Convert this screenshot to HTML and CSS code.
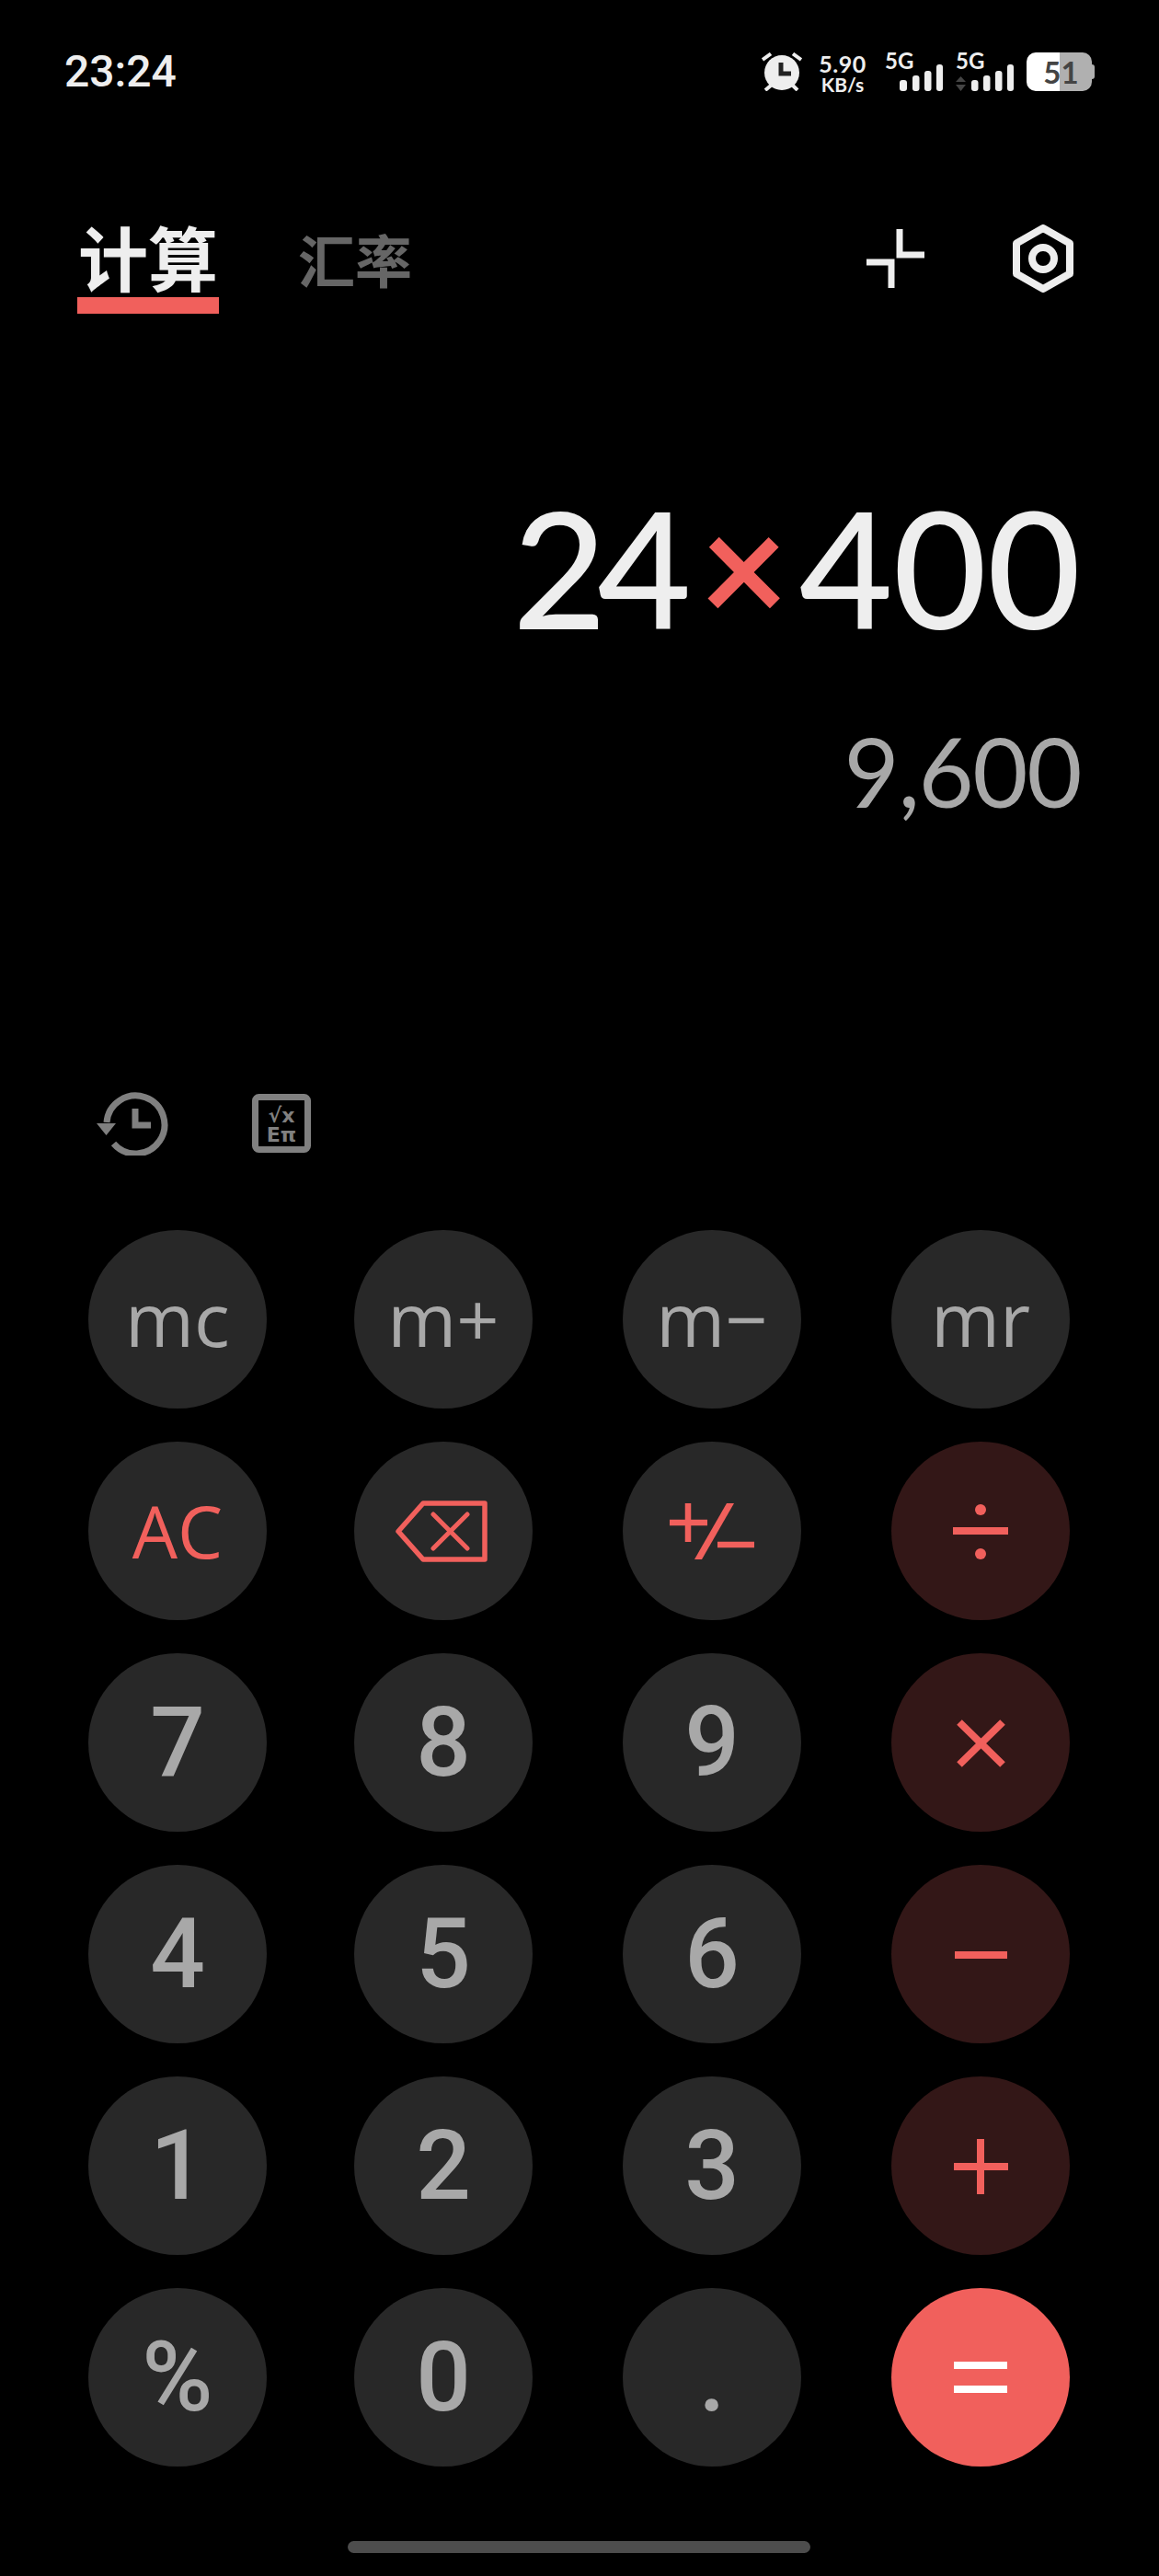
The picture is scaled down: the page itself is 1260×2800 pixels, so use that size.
FILE: index.html
```html
<!DOCTYPE html>
<html lang="zh-CN">
<head>
<meta charset="utf-8">
<title>计算器</title>
<link rel="stylesheet" href="styles.css">
</head>
<body>
<main class="app">
  <header class="status">
    <span class="clock">23:24</span>
    <div class="indicators">
      <svg class="alarm" viewBox="0 0 44 42" aria-label="闹钟">
        <circle cx="22" cy="22" r="19" class="fill-light"/>
        <path d="M21 11 V23 H32" class="alarm-hand"/>
        <path d="M1 8 L10 1.500 M34 1.500 L43 8 M4 41 L10 36 M39 41 L34 36" class="alarm-ear"/>
      </svg>
      <div class="speed"><span class="speed-value">5.90</span><span class="speed-unit">KB/s</span></div>
      <svg class="signal" viewBox="0 0 63 42" aria-label="5G">
        <text x="0" y="18" class="signal-label">5G</text>
        <rect x="16" y="30" width="8" height="12" rx="3" class="fill-light"/>
        <rect x="30" y="25" width="7.500" height="17" rx="3" class="fill-light"/>
        <rect x="43" y="20" width="7.500" height="22" rx="3" class="fill-light"/>
        <rect x="56" y="13" width="7" height="29" rx="3" class="fill-light"/>
      </svg>
      <svg class="signal" viewBox="0 0 63 42" aria-label="5G">
        <text x="0" y="18" class="signal-label">5G</text>
        <path d="M5.500 26 L11 32 H0 Z M0 35 H11 L5.500 42 Z" class="fill-dim"/>
        <rect x="17" y="30" width="7.500" height="12" rx="3" class="fill-light"/>
        <rect x="30" y="25" width="7.500" height="17" rx="3" class="fill-light"/>
        <rect x="43" y="20" width="7.500" height="22" rx="3" class="fill-light"/>
        <rect x="56" y="13" width="7" height="29" rx="3" class="fill-light"/>
      </svg>
      <div class="battery">51</div>
    </div>
  </header>

  <nav class="tabs">
    <div class="tab-active">
      <span class="tab-active-label">计算</span>
      <span class="tab-underline"></span>
    </div>
    <span class="tab-idle">汇率</span>
    <div class="tab-actions">
      <svg class="icon-compact" viewBox="0 0 63 64" aria-label="小窗">
        <path d="M36 0 V28 H63 M0 36 H27 V64" class="stroke-compact"/>
      </svg>
      <svg class="icon-settings" viewBox="0 0 66 74" aria-label="设置">
        <path d="M33 4 L62 20.500 V53.500 L33 70 L4 53.500 V20.500 Z" class="stroke-light"/>
        <circle cx="33" cy="37" r="12" class="stroke-light"/>
      </svg>
    </div>
  </nav>

  <section class="display">
    <div class="expression"><span class="operand-left">24</span><span class="operator">×</span>400</div>
    <div class="result">9,600</div>
  </section>

  <div class="tools">
    <svg class="icon-history" viewBox="0 0 78 72" aria-label="历史记录">
      <path d="M11 36 A31.500 31.500 0 1 1 18.500 59" class="stroke-grey"/>
      <path d="M0 37 H21 L10.500 50 Z" class="fill-grey"/>
      <path d="M42 21 V39 H59" class="stroke-grey"/>
    </svg>
    <svg class="icon-science" viewBox="0 0 64 64" aria-label="科学计算">
      <rect x="3.500" y="3.500" width="57" height="57" rx="4" class="stroke-grey"/>
      <text class="science-text"><tspan x="32" y="31">√x</tspan><tspan x="32" y="52">Eπ</tspan></text>
    </svg>
  </div>

  <section class="keypad">
    <button class="key key-memory">mc</button>
    <button class="key key-memory">m+</button>
    <button class="key key-memory">m−</button>
    <button class="key key-memory">mr</button>

    <button class="key key-clear">AC</button>
    <button class="key" aria-label="退格">
      <svg class="key-icon" viewBox="0 0 194 194">
        <path d="M142 67 V128 H75 L48 97.500 L75 67 Z" class="stroke-red stroke-mid"/>
        <path d="M86 79 L123 116 M123 79 L86 116" class="stroke-red stroke-thin"/>
      </svg>
    </button>
    <button class="key" aria-label="正负">
      <svg class="key-icon" viewBox="0 0 194 194">
        <path d="M51 88 H92 M71 67 V109 M103 112 H143" class="stroke-red stroke-mid-flat"/>
        <path d="M113 67 H121 L86 128 H78 Z" class="fill-red"/>
      </svg>
    </button>
    <button class="key key-op" aria-label="除">
      <svg class="key-icon" viewBox="0 0 194 194">
        <path d="M67 97 H127" class="stroke-red stroke-op"/>
        <circle cx="97" cy="74" r="6" class="fill-red"/>
        <circle cx="97" cy="122" r="6" class="fill-red"/>
      </svg>
    </button>

    <button class="key key-digit">7</button>
    <button class="key key-digit">8</button>
    <button class="key key-digit">9</button>
    <button class="key key-op" aria-label="乘">
      <svg class="key-icon" viewBox="0 0 194 194">
        <path d="M74 75 L121 121 M121 75 L74 121" class="stroke-red stroke-op"/>
      </svg>
    </button>

    <button class="key key-digit">4</button>
    <button class="key key-digit">5</button>
    <button class="key key-digit">6</button>
    <button class="key key-op" aria-label="减">
      <svg class="key-icon" viewBox="0 0 194 194">
        <path d="M69 98 H126" class="stroke-red stroke-op"/>
      </svg>
    </button>

    <button class="key key-digit">1</button>
    <button class="key key-digit">2</button>
    <button class="key key-digit">3</button>
    <button class="key key-op" aria-label="加">
      <svg class="key-icon" viewBox="0 0 194 194">
        <path d="M68 98 H127 M97 68 V128" class="stroke-red stroke-op"/>
      </svg>
    </button>

    <button class="key key-digit">%</button>
    <button class="key key-digit">0</button>
    <button class="key key-digit">.</button>
    <button class="key key-equals" aria-label="等于">
      <svg class="key-icon" viewBox="0 0 194 194">
        <path d="M68 84 H126 M68 110 H126" class="stroke-white stroke-op"/>
      </svg>
    </button>
  </section>

  <div class="home-bar"></div>
</main>
</body>
</html>
```

FILE: styles.css
```css
* { box-sizing: border-box; }

html, body {
  margin: 0;
  background: #000;
}

.app {
  width: 1260px;
  height: 2800px;
  background: #000;
  color: #eee;
  font-family: "Lato", "Noto Sans CJK SC", sans-serif;
  display: flex;
  flex-direction: column;
  overflow: hidden;
}

/* Status bar */
.status {
  height: 120px;
  padding: 57px 73px 0 70px;
  display: flex;
  justify-content: space-between;
  align-items: flex-start;
}

.clock {
  font-family: "Roboto", sans-serif;
  font-size: 48px;
  font-weight: 500;
  line-height: 42px;
  color: #eee;
}

.indicators {
  display: flex;
  align-items: flex-start;
}

.alarm {
  width: 44px;
  height: 42px;
  margin-right: 18px;
}

.fill-light { fill: #eee; }
.fill-dim { fill: #444; }
.fill-grey { fill: #808080; }
.fill-red { fill: #f1605c; }

.alarm-hand {
  fill: none;
  stroke: #222;
  stroke-width: 5;
}

.alarm-ear {
  fill: none;
  stroke: #eee;
  stroke-width: 4;
}

.speed {
  width: 52px;
  margin-right: 20px;
  display: flex;
  flex-direction: column;
  align-items: center;
  font-weight: 700;
  color: #eee;
}

.speed-value {
  font-size: 25px;
  line-height: 24px;
  letter-spacing: 0.5px;
}

.speed-unit {
  font-size: 21px;
  line-height: 20px;
  margin-top: 1px;
}

.signal {
  width: 63px;
  height: 42px;
  margin-right: 14px;
  overflow: visible;
}

.signal-label {
  font-family: "Lato", sans-serif;
  font-size: 24px;
  font-weight: 700;
  fill: #eee;
}

.battery {
  position: relative;
  width: 71px;
  height: 42px;
  border-radius: 10px;
  background: linear-gradient(90deg, #fff 36px, #b0b0b0 36px);
  color: #444;
  font-size: 33px;
  font-weight: 700;
  line-height: 42px;
  text-align: center;
  padding-left: 4px;
}

.battery::after {
  content: "";
  position: absolute;
  left: 71px;
  top: 13px;
  width: 3px;
  height: 16px;
  border-radius: 0 3px 3px 0;
  background: #b0b0b0;
}

/* Tabs */
.tabs {
  height: 240px;
  padding: 121px 93px 0 84px;
  display: flex;
  align-items: flex-start;
}

.tab-active {
  width: 154px;
  display: flex;
  flex-direction: column;
  align-items: center;
}

.tab-active-label {
  font-family: "Noto Sans CJK SC", sans-serif;
  font-size: 76px;
  font-weight: 700;
  line-height: 74px;
  white-space: nowrap;
  color: #eee;
}

.tab-underline {
  width: 154px;
  height: 18px;
  margin-top: 8px;
  background: #f1605c;
}

.tab-idle {
  font-family: "Noto Sans CJK SC", sans-serif;
  font-size: 62px;
  font-weight: 700;
  line-height: 60px;
  color: #666;
  margin: 10px 0 0 86px;
}

.tab-actions {
  margin-left: auto;
  display: flex;
  align-items: flex-start;
  gap: 96px;
}

.icon-compact {
  width: 63px;
  height: 64px;
  margin-top: 8px;
  overflow: visible;
}

.icon-settings {
  width: 66px;
  height: 74px;
  margin-top: 3px;
}

.stroke-light {
  fill: none;
  stroke: #eee;
  stroke-width: 8;
  stroke-linejoin: round;
}

.stroke-compact {
  fill: none;
  stroke: #eee;
  stroke-width: 7;
}

.stroke-grey {
  fill: none;
  stroke: #808080;
  stroke-width: 7;
}

.science-text {
  font-family: "DejaVu Sans", sans-serif;
  font-size: 22px;
  font-weight: 700;
  fill: #808080;
  text-anchor: middle;
}

/* Display */
.display {
  height: 824px;
  padding: 0 85px 0 0;
  text-align: right;
}

.expression {
  font-size: 176px;
  font-weight: 500;
  line-height: 176px;
  padding-top: 168px;
  height: 344px;
  color: #eee;
}

.operand-left {
  letter-spacing: -10px;
}

.operator {
  color: #f1605c;
  font-size: 166px;
  font-weight: 700;
  line-height: 0;
  vertical-align: 6px;
  margin: 0 12px 0 19px;
}

.result {
  font-size: 104px;
  font-weight: 400;
  line-height: 104px;
  margin-top: 82px;
  letter-spacing: -1.500px;
  color: #a8a8a8;
}

/* Tools */
.tools {
  height: 153px;
  padding-left: 105px;
  display: flex;
  align-items: flex-start;
  gap: 91px;
}

.icon-history {
  width: 78px;
  height: 72px;
}

.icon-science {
  width: 64px;
  height: 64px;
  margin-top: 5px;
}

/* Keypad */
.keypad {
  padding-left: 96px;
  display: grid;
  grid-template-columns: 289px 292px 292px 194px;
  grid-auto-rows: 194px;
  row-gap: 36px;
}

.key {
  width: 194px;
  height: 194px;
  padding: 0;
  border: 0;
  border-radius: 50%;
  background: #282828;
  color: #a8a8a8;
  font-family: "Lato", sans-serif;
  display: flex;
  align-items: center;
  justify-content: center;
}

.key-memory {
  font-family: "Open Sans", sans-serif;
  font-size: 81px;
  line-height: 1;
  padding-bottom: 3px;
}

.key-clear {
  font-family: "Open Sans", sans-serif;
  font-size: 78px;
  line-height: 1;
  padding-bottom: 1px;
  color: #f1605c;
}

.key-digit {
  font-family: "Roboto", sans-serif;
  font-size: 105px;
  font-weight: 500;
  line-height: 1;
}

.key-op { background: #331717; }
.key-equals { background: #f1605c; }

.key-icon {
  width: 194px;
  height: 194px;
  display: block;
}

.stroke-red {
  fill: none;
  stroke: #f1605c;
}

.stroke-white {
  fill: none;
  stroke: #fff;
}

.stroke-mid {
  stroke-width: 5.500;
  stroke-linejoin: round;
  stroke-linecap: round;
}

.stroke-thin { stroke-width: 5; stroke-linecap: round; }
.stroke-mid-flat { stroke-width: 6.500; }
.stroke-op { stroke-width: 8; }

/* Home indicator */
.home-bar {
  width: 503px;
  height: 13px;
  margin: 81px 0 0 378px;
  border-radius: 7px;
  background: #4d4d4d;
}
```
